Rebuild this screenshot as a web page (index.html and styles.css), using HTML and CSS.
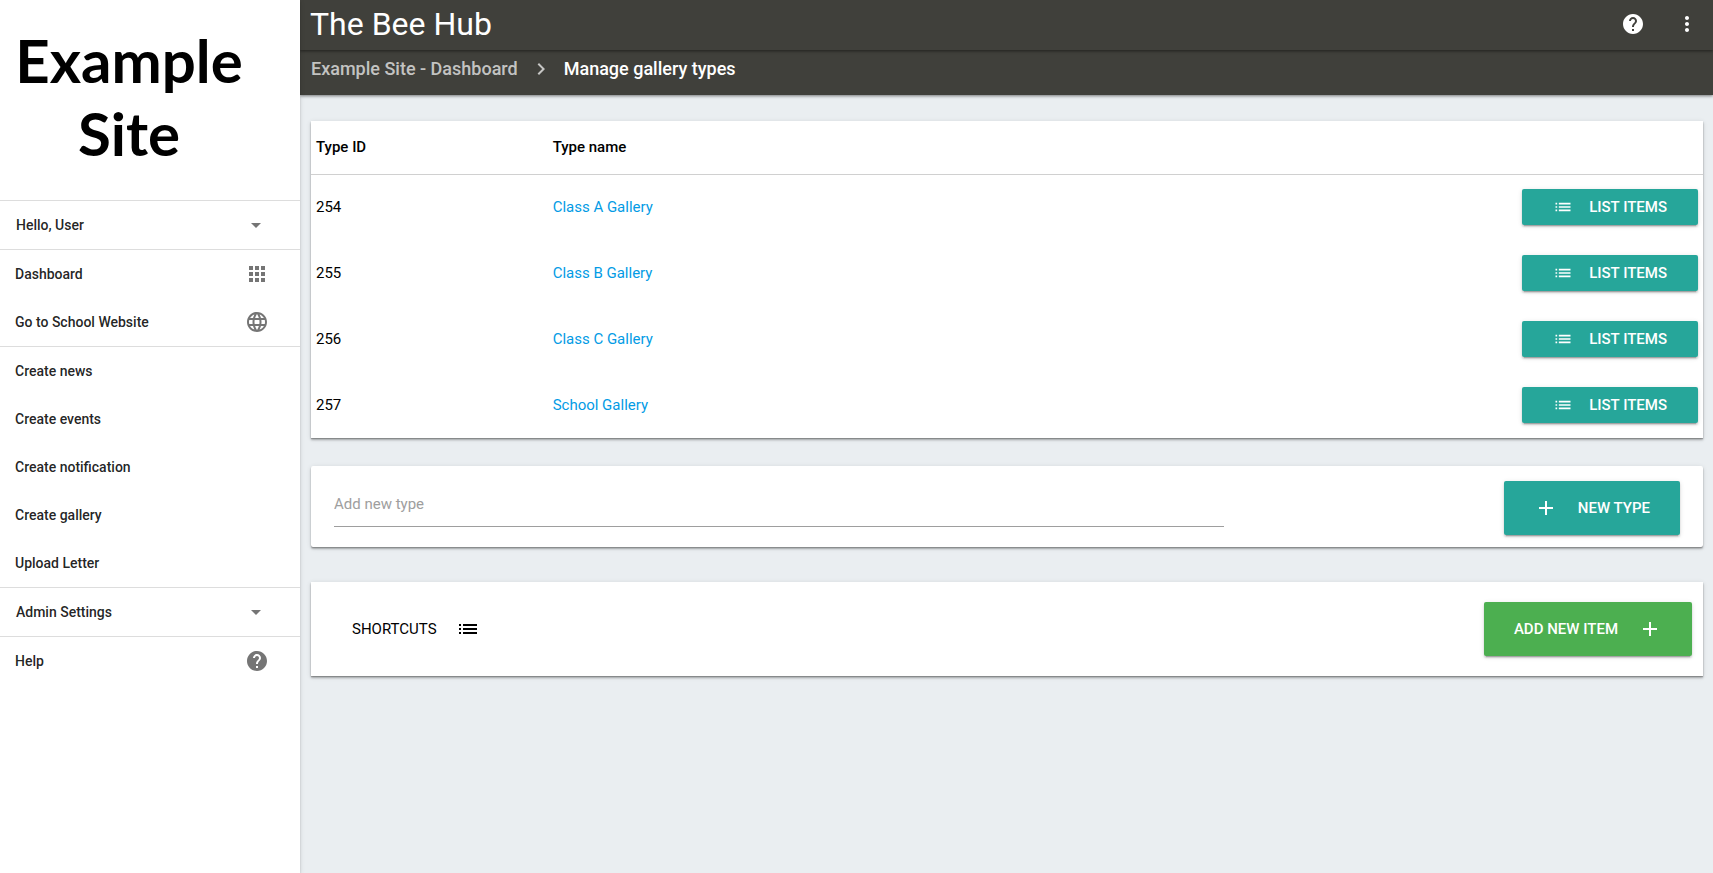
FILE: index.html
```html
<!DOCTYPE html>
<html lang="en">
<head>
<meta charset="utf-8">
<title>The Bee Hub - Manage gallery types</title>
<meta name="viewport" content="width=device-width, initial-scale=1">
<link rel="stylesheet" href="styles.css">
</head>
<body>
<svg class="sprite" aria-hidden="true">
  <symbol id="i-list" viewBox="0 0 24 24"><path d="M3 13h2v-2H3v2zm0 4h2v-2H3v2zm0-8h2V7H3v2zm4 4h14v-2H7v2zm0 4h14v-2H7v2zM7 7v2h14V7H7z"/></symbol>
  <symbol id="i-add" viewBox="0 0 24 24"><path d="M19 13h-6v6h-2v-6H5v-2h6V5h2v6h6v2z"/></symbol>
  <symbol id="i-help" viewBox="0 0 24 24"><path d="M12 2C6.480 2 2 6.480 2 12s4.480 10 10 10 10-4.480 10-10S17.520 2 12 2zm1 17h-2v-2h2v2zm2.070-7.750l-.9.920C13.450 12.900 13 13.500 13 15h-2v-.5c0-1.100.45-2.100 1.170-2.830l1.240-1.260c.37-.36.59-.86.59-1.410 0-1.100-.9-2-2-2s-2 .9-2 2H8c0-2.210 1.790-4 4-4s4 1.790 4 4c0 .88-.36 1.680-.93 2.250z"/></symbol>
  <symbol id="i-more" viewBox="0 0 24 24"><path d="M12 8c1.100 0 2-.9 2-2s-.9-2-2-2-2 .9-2 2 .9 2 2 2zm0 2c-1.100 0-2 .9-2 2s.9 2 2 2 2-.9 2-2-.9-2-2-2zm0 6c-1.100 0-2 .9-2 2s.9 2 2 2 2-.9 2-2-.9-2-2-2z"/></symbol>
  <symbol id="i-apps" viewBox="0 0 24 24"><path d="M4 8h4V4H4v4zm6 12h4v-4h-4v4zm-6 0h4v-4H4v4zm0-6h4v-4H4v4zm6 0h4v-4h-4v4zm6-10v4h4V4h-4zm-6 4h4V4h-4v4zm6 6h4v-4h-4v4zm0 6h4v-4h-4v4z"/></symbol>
  <symbol id="i-globe" viewBox="0 0 24 24"><path d="M11.990 2C6.470 2 2 6.480 2 12s4.470 10 9.990 10C17.520 22 22 17.520 22 12S17.520 2 11.990 2zm6.930 6h-2.950c-.32-1.250-.78-2.450-1.380-3.560 1.840.63 3.370 1.910 4.330 3.560zM12 4.040c.83 1.200 1.480 2.530 1.910 3.960h-3.820c.43-1.430 1.080-2.760 1.910-3.960zM4.260 14C4.100 13.360 4 12.690 4 12s.1-1.360.26-2h3.380c-.08.66-.14 1.320-.14 2 0 .68.06 1.340.14 2H4.260zm.82 2h2.950c.32 1.250.78 2.450 1.380 3.560-1.840-.63-3.370-1.900-4.330-3.560zm2.950-8H5.080c.96-1.660 2.490-2.930 4.330-3.560C8.810 5.550 8.350 6.750 8.030 8zM12 19.960c-.83-1.200-1.480-2.530-1.910-3.960h3.820c-.43 1.430-1.080 2.760-1.910 3.960zM14.340 14H9.660c-.09-.66-.16-1.320-.16-2 0-.68.07-1.350.16-2h4.680c.09.65.16 1.320.16 2 0 .68-.07 1.340-.16 2zm.25 5.560c.6-1.110 1.060-2.310 1.380-3.560h2.950c-.96 1.650-2.490 2.930-4.330 3.560zM16.360 14c.08-.66.14-1.320.14-2 0-.68-.06-1.340-.14-2h3.380c.16.64.26 1.310.26 2s-.1 1.360-.26 2h-3.380z"/></symbol>
  <symbol id="i-down" viewBox="0 0 24 24"><path d="M7 10l5 5 5-5z"/></symbol>
  <symbol id="i-chevron" viewBox="0 0 24 24"><path d="M10 6L8.590 7.410 13.170 12l-4.580 4.590L10 18l6-6z"/></symbol>
</svg>

<div class="app">
  <aside class="sidebar">
    <div class="logo">Example<br>Site</div>
    <nav>
      <div class="nav-group">
        <button class="nav-item nav-toggle" type="button">Hello, User<svg class="icon"><use href="#i-down"/></svg></button>
      </div>
      <div class="nav-group">
        <a class="nav-item" href="#">Dashboard<svg class="icon"><use href="#i-apps"/></svg></a>
        <a class="nav-item" href="#">Go to School Website<svg class="icon"><use href="#i-globe"/></svg></a>
      </div>
      <div class="nav-group">
        <a class="nav-item" href="#">Create news</a>
        <a class="nav-item" href="#">Create events</a>
        <a class="nav-item" href="#">Create notification</a>
        <a class="nav-item" href="#">Create gallery</a>
        <a class="nav-item" href="#">Upload Letter</a>
      </div>
      <div class="nav-group">
        <button class="nav-item nav-toggle" type="button">Admin Settings<svg class="icon"><use href="#i-down"/></svg></button>
      </div>
      <div class="nav-group">
        <a class="nav-item" href="#">Help<svg class="icon"><use href="#i-help"/></svg></a>
      </div>
    </nav>
  </aside>

  <div class="page">
    <header class="topbar">
      <h1 class="title">The Bee Hub</h1>
      <div class="tools">
        <button class="tool" type="button" aria-label="Help"><svg class="icon"><use href="#i-help"/></svg></button>
        <button class="tool" type="button" aria-label="More"><svg class="icon"><use href="#i-more"/></svg></button>
      </div>
    </header>
    <nav class="crumbs" aria-label="Breadcrumb">
      <a class="crumb" href="#">Example Site - Dashboard</a>
      <svg class="icon crumb-sep"><use href="#i-chevron"/></svg>
      <a class="crumb crumb-current" href="#" aria-current="page">Manage gallery types</a>
    </nav>

    <main class="content">
      <table class="card types">
        <thead>
          <tr><th class="col-id">Type ID</th><th>Type name</th><th class="col-action"></th></tr>
        </thead>
        <tbody>
          <tr><td>254</td><td><a class="link" href="#">Class A Gallery</a></td><td class="col-action"><button class="btn" type="button"><svg class="icon"><use href="#i-list"/></svg>LIST ITEMS</button></td></tr>
          <tr><td>255</td><td><a class="link" href="#">Class B Gallery</a></td><td class="col-action"><button class="btn" type="button"><svg class="icon"><use href="#i-list"/></svg>LIST ITEMS</button></td></tr>
          <tr><td>256</td><td><a class="link" href="#">Class C Gallery</a></td><td class="col-action"><button class="btn" type="button"><svg class="icon"><use href="#i-list"/></svg>LIST ITEMS</button></td></tr>
          <tr><td>257</td><td><a class="link" href="#">School Gallery</a></td><td class="col-action"><button class="btn" type="button"><svg class="icon"><use href="#i-list"/></svg>LIST ITEMS</button></td></tr>
        </tbody>
      </table>

      <form class="card new-type">
        <div class="field"><input class="text-input" type="text" placeholder="Add new type" aria-label="Add new type"></div>
        <button class="btn btn-large" type="button"><svg class="icon"><use href="#i-add"/></svg>NEW TYPE</button>
      </form>

      <section class="card shortcuts">
        <h2 class="shortcuts-title">SHORTCUTS<svg class="icon"><use href="#i-list"/></svg></h2>
        <button class="btn btn-large btn-green" type="button">ADD NEW ITEM<svg class="icon"><use href="#i-add"/></svg></button>
      </section>
    </main>
  </div>
</div>
</body>
</html>
```
FILE: styles.css
```css
* { box-sizing: border-box; }

body {
  margin: 0;
  background: #eaeef1;
  color: #000;
  font: 15px/22px Roboto, sans-serif;
}

button, input { font: inherit; color: inherit; }
button { border: 0; background: none; cursor: pointer; }
a { text-decoration: none; }

.sprite { display: none; }
.icon { display: block; flex: none; width: 24px; height: 24px; fill: currentColor; }

.app { display: flex; min-height: 100vh; }

/* Sidebar */
.sidebar {
  flex: none;
  z-index: 1;
  width: 300px;
  background: #fff;
  box-shadow: 0 2px 2px rgba(0, 0, 0, .14), 0 1px 5px rgba(0, 0, 0, .12);
}
.logo {
  height: 200px;
  padding: 24px 42px 0 0;
  font: bold 60px/73px Lato, sans-serif;
  text-align: center;
}
.nav-group { border-top: 1px solid #ddd; }
.nav-item {
  display: flex;
  align-items: center;
  justify-content: space-between;
  width: 100%;
  height: 48px;
  padding: 0 31px 0 15px;
  color: rgba(0, 0, 0, .87);
  font-size: 14px;
  font-weight: 500;
  text-align: left;
}
.nav-toggle { padding: 0 32px 0 16px; }
.nav-item .icon { color: #757575; }

/* Header */
.page { flex: 1; min-width: 0; }
.topbar {
  position: relative;
  display: flex;
  align-items: center;
  justify-content: space-between;
  height: 50px;
  padding: 0 14px 2px 10px;
  background: #40403b;
  color: #fff;
  box-shadow: 0 1px 3px rgba(0, 0, 0, .5);
}
.title { margin: 0; font-size: 32px; line-height: 48px; font-weight: 400; }
.tools { display: flex; gap: 30px; }
.tool { padding: 0; }
.crumbs {
  display: flex;
  align-items: center;
  gap: 11px;
  height: 45px;
  padding: 0 11px 8px;
  background: #40403b;
  box-shadow: 0 1px 3px rgba(0, 0, 0, .5);
  font-size: 18px;
  font-weight: 500;
}
.crumb { color: rgba(255, 255, 255, .7); }
.crumb-current { color: #fff; }
.crumb-sep { color: rgba(255, 255, 255, .7); }

/* Content */
.content { padding: 26px 10px 26px 11px; }
.card {
  background: #fff;
  box-shadow: 0 2px 2px rgba(0, 0, 0, .24), 0 1px 5px rgba(0, 0, 0, .12), 0 1px 1px rgba(0, 0, 0, .2);
}

.types { width: 100%; border-collapse: collapse; table-layout: fixed; }
.types thead { border-bottom: 1px solid #d0d0d0; }
.types th { height: 53px; padding: 0 5px; font-weight: 500; text-align: left; }
.types td { height: 66px; padding: 0 5px; }
.types .col-id { width: 17%; }
.types .col-action { text-align: right; }
.link { color: #039be5; }

.btn {
  display: inline-flex;
  align-items: center;
  gap: 16px;
  height: 36px;
  padding: 0 31px;
  border-radius: 2px;
  background: #26a69a;
  color: #fff;
  font-weight: 500;
  white-space: nowrap;
  vertical-align: middle;
  box-shadow: 0 2px 2px rgba(0, 0, 0, .14), 0 1px 5px rgba(0, 0, 0, .12), 0 3px 1px -2px rgba(0, 0, 0, .2);
}
.btn .icon { width: 20px; height: 20px; }
.btn-large { gap: 20px; height: 54px; padding: 0 30px; }
.btn-large .icon { width: 24px; height: 24px; }
.btn-green { background: #4caf50; }

.new-type {
  display: flex;
  align-items: flex-start;
  justify-content: space-between;
  margin-top: 28px;
  padding: 15px 12px 12px;
  border-radius: 2px;
}
.new-type .btn { margin-right: 11px; }
.field { width: calc(100% * 8 / 12); padding: 0 11px; }
.text-input {
  display: block;
  width: 100%;
  height: 46px;
  padding: 0;
  border: 0;
  border-bottom: 1px solid #9e9e9e;
  background: none;
  outline: none;
}
.text-input::placeholder { color: #9e9e9e; opacity: 1; }

.shortcuts {
  display: flex;
  align-items: center;
  justify-content: space-between;
  margin-top: 35px;
  padding: 20px 11px 20px 41px;
}
.shortcuts-title {
  display: flex;
  align-items: center;
  gap: 19px;
  margin: 0;
  font-size: 15px;
  font-weight: 400;
}
```
